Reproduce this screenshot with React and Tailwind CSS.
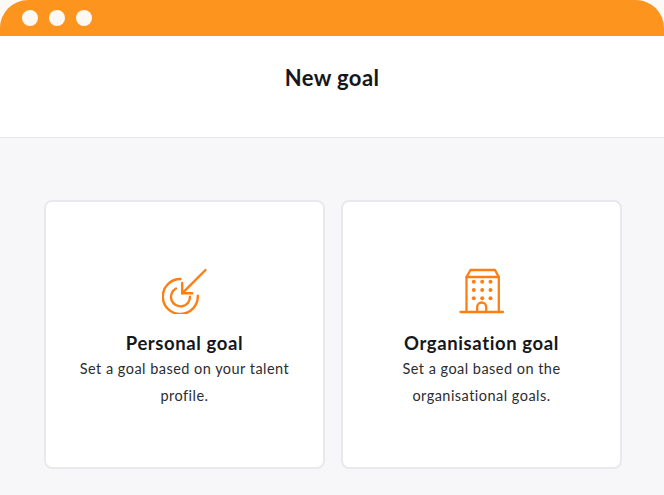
import React from "react";

function TargetIcon() {
  return (
    <svg width="46" height="46" viewBox="0 0 46 46" fill="none" stroke="#fd7f14" strokeWidth="2.4" strokeLinecap="round" strokeLinejoin="round">
      <path d="M43.5 2 L20.2 25.3" />
      <path d="M20.2 15 V25.3 H30.2" />
      <path d="M18.5 11 A17.5 17.5 0 1 0 35.8 27.7" />
      <path d="M14 20.5 A9.5 9.5 0 1 0 28 28.7" />
    </svg>
  );
}

function BuildingIcon() {
  return (
    <svg width="46" height="46" viewBox="0 0 46 46" fill="none" stroke="#fd7f14" strokeWidth="2.3" strokeLinecap="round" strokeLinejoin="round">
      <path d="M1.5 44 H44" />
      <path d="M7.5 44 V9 L11.5 2 H36 L39.8 9 V44" />
      <path d="M7.5 9 H39.8" />
      <path d="M18.2 44 V39 A4.5 4.5 0 0 1 27.2 39 V44" />
      <g fill="#fd7f14" stroke="none">
        <circle cx="14.8" cy="13.7" r="2" />
        <circle cx="23.2" cy="13.7" r="2" />
        <circle cx="31.5" cy="13.7" r="2" />
        <circle cx="14.8" cy="22" r="2" />
        <circle cx="23.2" cy="22" r="2" />
        <circle cx="31.5" cy="22" r="2" />
        <circle cx="14.8" cy="30.3" r="2" />
        <circle cx="23.2" cy="30.3" r="2" />
        <circle cx="31.5" cy="30.3" r="2" />
      </g>
    </svg>
  );
}

function GoalCard({ icon, title, lines }) {
  return (
    <div className="w-[281px] h-[269px] flex flex-col items-center bg-white border-2 border-[#e8e9ed] rounded-lg pt-[66px]">
      {icon}
      <h2 className="mt-[17px] text-[18.5px] leading-6 font-bold text-[#16171b] tracking-[0.6px]">{title}</h2>
      <p className="text-[14.5px] leading-[27px] text-[#2b2d32] text-center tracking-[0.47px]">
        {lines[0]}
        <br />
        {lines[1]}
      </p>
    </div>
  );
}

export default function App() {
  return (
    <div className="w-[664px] h-[495px] overflow-hidden bg-[#fdf9f4] font-['Lato',sans-serif]">
      {/* window bar */}
      <div className="h-9 bg-[#fd941e] rounded-t-[28px] flex items-center gap-[11px] pl-[22px]">
        <span className="w-4 h-4 rounded-full bg-[#fdf8f2]" />
        <span className="w-4 h-4 rounded-full bg-[#fdf8f2]" />
        <span className="w-4 h-4 rounded-full bg-[#fdf8f2]" />
      </div>

      <header className="h-[102px] bg-white border-b border-[#e6e7ea] flex justify-center pt-[28px]">
        <h1 className="text-[22px] leading-7 font-bold text-[#16171b] tracking-[0.4px]">New goal</h1>
      </header>

      <main className="h-[357px] bg-[#f7f7f9] flex gap-[16px] pl-[44px] pt-[62px]">
        <GoalCard
          icon={<TargetIcon />}
          title="Personal goal"
          lines={["Set a goal based on your talent", "profile."]}
        />
        <GoalCard
          icon={<BuildingIcon />}
          title="Organisation goal"
          lines={["Set a goal based on the", "organisational goals."]}
        />
      </main>
    </div>
  );
}
